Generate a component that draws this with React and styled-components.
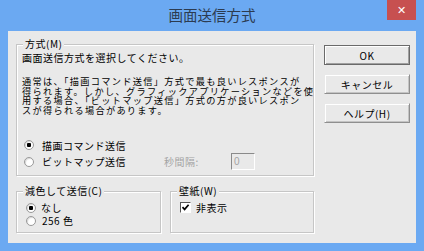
import React, { useState } from "react";
import styled, { createGlobalStyle } from "styled-components";

const GlobalStyle = createGlobalStyle`
  html, body {
    margin: 0;
    padding: 0;
    background: #6ba9f2;
  }
  body {
    font-family: "Noto Sans CJK JP", "Noto Sans", sans-serif;
  }
`;

const FONT = `"Noto Sans CJK JP", "Noto Sans", sans-serif`;

const Window = styled.div`
  width: 424px;
  height: 251px;
  box-sizing: border-box;
  background: #6ba9f2;
  padding: 0 8px 8px;
  display: flex;
  flex-direction: column;
`;

const TitleBar = styled.div`
  height: 31px;
  display: grid;
  grid-template-columns: 1fr auto 1fr;
  align-items: start;
`;

const Title = styled.div`
  grid-column: 2;
  font-family: ${FONT};
  font-size: 14.5px;
  line-height: 30px;
  color: #2c3b50;
`;

const CloseButton = styled.div`
  grid-column: 3;
  justify-self: end;
  width: 29px;
  height: 20px;
  background: #c75050;
  color: #fff;
  font-family: "DejaVu Sans", sans-serif;
  font-weight: bold;
  font-size: 11px;
  display: flex;
  align-items: center;
  justify-content: center;
`;

const Client = styled.div`
  flex: 1;
  background: #e9e9e9;
  box-sizing: border-box;
  padding: 13px 6px 0 8px;
  display: grid;
  grid-template-columns: 298px 1fr;
  column-gap: 10px;
  align-items: start;
  font-family: ${FONT};
  font-size: 10px;
  letter-spacing: 0.5px;
  color: #000;
`;

const LeftColumn = styled.div`
  display: flex;
  flex-direction: column;
  gap: 15px;
`;

const Group = styled.div`
  position: relative;
  box-sizing: border-box;
  height: ${(p) => p.h}px;
  border: 1px solid #c6c6c6;
  box-shadow: inset 1px 1px 0 #fff, 1px 1px 0 #fff;
  padding: ${(p) => p.pad};
`;

const Legend = styled.span`
  position: absolute;
  top: -7px;
  left: 6px;
  padding: 0 2px;
  background: #e9e9e9;
  line-height: 12px;
  white-space: nowrap;
`;

const Lead = styled.div`
  line-height: 10px;
  padding-left: 5px;
  white-space: nowrap;
`;

const Paragraph = styled.div`
  margin-top: 14px;
  padding-left: 5px;
  font-size: 9.2px;
  letter-spacing: 1.3px;
  line-height: 9.6px;
  white-space: nowrap;
`;

const RadioList = styled.div`
  margin-top: 22px;
  padding-left: 7px;
  display: flex;
  flex-direction: column;
`;

const RadioRow = styled.div`
  display: grid;
  grid-template-columns: ${(p) => p.cols || "auto"};
  align-items: center;
  height: ${(p) => p.h || 16}px;
`;

const Choice = styled.label`
  display: flex;
  align-items: center;
  gap: ${(p) => p.gap || 7}px;
  white-space: nowrap;
`;

const RadioDot = styled.span`
  width: 10px;
  height: 10px;
  box-sizing: border-box;
  border-radius: 50%;
  border: 1px solid #9a9a9a;
  background: radial-gradient(circle, ${(p) => (p.on ? "#000 0 2px" : "#fff 0 2px")}, #fff 2.5px);
  box-shadow: inset 1px 1px 1px rgba(0,0,0,0.15);
  flex: none;
`;

const CheckBox = styled.span`
  width: 11px;
  height: 11px;
  box-sizing: border-box;
  border-top: 1px solid #555;
  border-left: 1px solid #555;
  border-right: 1px solid #fff;
  border-bottom: 1px solid #fff;
  background: #fff;
  display: flex;
  align-items: center;
  justify-content: center;
  flex: none;
`;

const Muted = styled.span`
  color: #a3a3a3;
  white-space: nowrap;
`;

const NumberBox = styled.div`
  width: 24px;
  height: 17px;
  box-sizing: border-box;
  border-top: 1px solid #8a8a8a;
  border-left: 1px solid #8a8a8a;
  border-right: 1px solid #fff;
  border-bottom: 1px solid #fff;
  color: #a3a3a3;
  font-family: "Liberation Sans", sans-serif;
  font-size: 10px;
  line-height: 15px;
  padding-left: 2px;
`;

const BottomRow = styled.div`
  display: grid;
  grid-template-columns: 145px 144px;
  column-gap: 9px;
`;

const SmallList = styled.div`
  padding: 8px 0 0 9px;
  display: flex;
  flex-direction: column;
`;

const Buttons = styled.div`
  margin-top: 1px;
  display: flex;
  flex-direction: column;
  gap: 9px;
`;

const Button = styled.button`
  width: 86px;
  height: 20px;
  box-sizing: border-box;
  padding: 0;
  font-family: ${FONT};
  font-size: 10px;
  letter-spacing: 0.5px;
  color: #000;
  background: #e9e9e9;
  border: 1px solid ${(p) => (p.primary ? "#6a6a6a" : "#e9e9e9")};
  border-right-color: ${(p) => (p.primary ? "#6a6a6a" : "#8f8f8f")};
  border-bottom-color: ${(p) => (p.primary ? "#6a6a6a" : "#8f8f8f")};
  box-shadow: ${(p) =>
    p.primary
      ? "inset 1px 1px 0 #fff, inset -1px -1px 0 #a0a0a0"
      : "inset 1px 1px 0 #fff, inset -1px -1px 0 #c4c4c4"};
`;

export default function App() {
  const [mode, setMode] = useState("draw");
  const [depth, setDepth] = useState("none");
  const [hideWall, setHideWall] = useState(true);

  return (
    <Window>
      <GlobalStyle />
      <TitleBar>
        <Title>画面送信方式</Title>
        <CloseButton>✕</CloseButton>
      </TitleBar>
      <Client>
        <LeftColumn>
          <Group h={132} pad="8px 0 0 0">
            <Legend>方式(M)</Legend>
            <Lead>画面送信方式を選択してください。</Lead>
            <Paragraph>
              通常は、「描画コマンド送信」方式で最も良いレスポンスが<br />
              得られます。しかし、グラフィックアプリケーションなどを使<br />
              用する場合、「ビットマップ送信」方式の方が良いレスポン<br />
              スが得られる場合があります。
            </Paragraph>
            <RadioList>
              <RadioRow>
                <Choice gap={8} onClick={() => setMode("draw")}>
                  <RadioDot on={mode === "draw" ? 1 : 0} />
                  描画コマンド送信
                </Choice>
              </RadioRow>
              <RadioRow cols="140px 67px 24px">
                <Choice gap={8} onClick={() => setMode("bitmap")}>
                  <RadioDot on={mode === "bitmap" ? 1 : 0} />
                  ビットマップ送信
                </Choice>
                <Muted>秒間隔:</Muted>
                <NumberBox>0</NumberBox>
              </RadioRow>
            </RadioList>
          </Group>
          <BottomRow>
            <Group h={42} pad="0">
              <Legend>減色して送信(C)</Legend>
              <SmallList>
                <RadioRow h={13}>
                  <Choice gap={5} onClick={() => setDepth("none")}>
                    <RadioDot on={depth === "none" ? 1 : 0} />
                    なし
                  </Choice>
                </RadioRow>
                <RadioRow h={13}>
                  <Choice gap={6} onClick={() => setDepth("256")}>
                    <RadioDot on={depth === "256" ? 1 : 0} />
                    256 色
                  </Choice>
                </RadioRow>
              </SmallList>
            </Group>
            <Group h={42} pad="0">
              <Legend>壁紙(W)</Legend>
              <SmallList>
                <RadioRow h={13}>
                  <Choice gap={5} onClick={() => setHideWall(!hideWall)}>
                    <CheckBox>
                      {hideWall && (
                        <svg width="9" height="9" viewBox="0 0 9 9">
                          <path d="M1.5 4.2 L3.6 6.4 L7.6 1.8" fill="none" stroke="#000" strokeWidth="1.7" />
                        </svg>
                      )}
                    </CheckBox>
                    非表示
                  </Choice>
                </RadioRow>
              </SmallList>
            </Group>
          </BottomRow>
        </LeftColumn>
        <Buttons>
          <Button primary>OK</Button>
          <Button>キャンセル</Button>
          <Button>ヘルプ(H)</Button>
        </Buttons>
      </Client>
    </Window>
  );
}
